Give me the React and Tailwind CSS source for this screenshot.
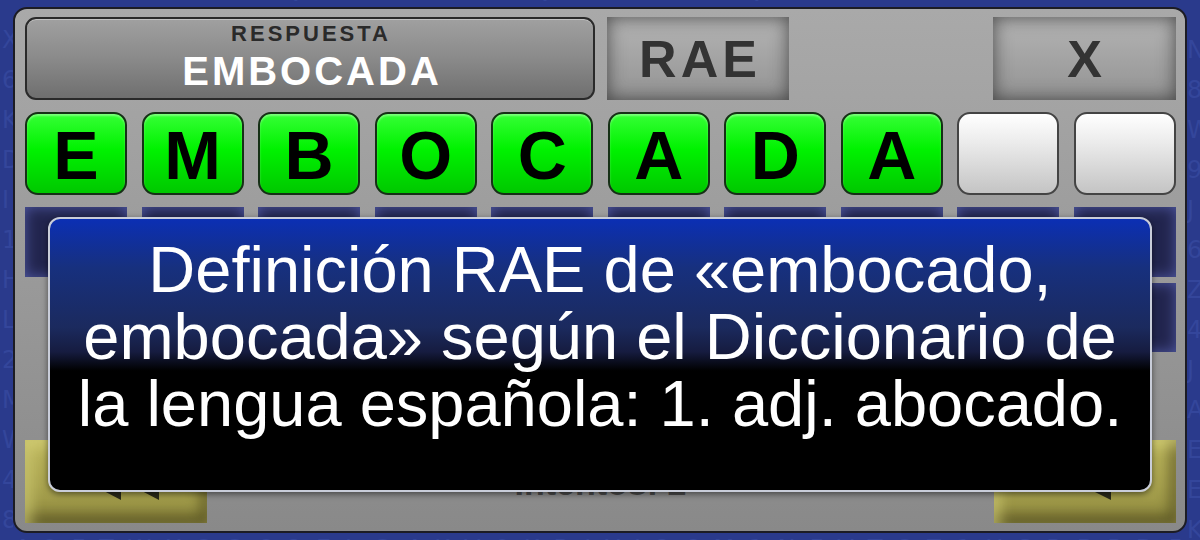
import React from "react";

// letras tenues del fondo (solo se ven en los bordes, alrededor del panel)
function bgText(seed0, n) {
  const chars = "ABCDEFGHIJKLMNOPQRSTUVWXYZ0123456789";
  let seed = seed0;
  let out = "";
  for (let i = 0; i < n; i++) {
    seed = (seed * 9301 + 49297) % 233280;
    out += chars[Math.floor((seed / 233280) * chars.length)];
  }
  return out;
}

const LETTERS = ["E", "M", "B", "O", "C", "A", "D", "A", "", ""];

function GreenTile({ letter }) {
  return (
    <div className="h-[83px] rounded-[13px] border-2 border-[#163016] bg-[linear-gradient(180deg,#35ff35_0%,#00f200_45%,#00c800_100%)] flex items-center justify-center shadow-[inset_0_2px_2px_rgba(255,255,255,0.35)]">
      <span className="text-[68px] font-bold leading-none text-black translate-y-[1px]">{letter}</span>
    </div>
  );
}

function WhiteTile() {
  return (
    <div className="h-[83px] rounded-[13px] border-2 border-[#444] bg-[linear-gradient(180deg,#ffffff_0%,#ececec_35%,#c4c4c4_100%)]" />
  );
}

function BlueKey() {
  return (
    <div className="h-full bg-[#22254e] shadow-[inset_0_0_14px_rgba(95,105,190,0.75)]" />
  );
}

function GrayButton({ children, className }) {
  return (
    <div
      className={`h-[83px] flex items-center justify-center bg-[linear-gradient(180deg,#b4b4b4_0%,#a2a2a2_55%,#939393_100%)] shadow-[inset_0_0_18px_rgba(40,40,40,0.75)] text-[#333] font-bold text-[52px] leading-none tracking-[4px] ${className}`}
    >
      <span className="translate-x-[2px]">{children}</span>
    </div>
  );
}

function YellowButton({ children }) {
  return (
    <div className="relative w-[182px] h-[83px] bg-[linear-gradient(180deg,#bbb55c_0%,#a9a34f_55%,#8f8a3f_100%)] shadow-[inset_6px_6px_14px_rgba(225,220,130,0.6),inset_-6px_-8px_14px_rgba(60,55,20,0.6)] flex items-center justify-center">
      {children}
    </div>
  );
}

const stripText = "text-[24px] leading-[40px] text-[#34469b] select-none font-['DejaVu_Sans',sans-serif]";

export default function App() {
  return (
    <div className="relative w-[1200px] h-[540px] overflow-hidden bg-[#2a3a8c] font-['Liberation_Sans',Arial,sans-serif]">
      {/* bordes con letras */}
      <div className={`absolute left-0 top-0 w-[13px] h-[540px] overflow-hidden pl-[2px] pt-[20px] break-all ${stripText}`}>
        <div className="w-[20px]">{bgText(11, 14)}</div>
      </div>
      <div className={`absolute right-0 top-0 w-[13px] h-[540px] overflow-hidden pt-[30px] break-all ${stripText}`}>
        <div className="w-[20px]">{bgText(29, 14)}</div>
      </div>
      <div className={`absolute left-[13px] top-0 w-[1174px] h-[7px] overflow-hidden whitespace-nowrap tracking-[14px] ${stripText}`}>
        <div className="-translate-y-[30px]">{bgText(5, 40)}</div>
      </div>
      <div className={`absolute left-[13px] bottom-0 w-[1174px] h-[7px] overflow-hidden whitespace-nowrap tracking-[14px] ${stripText}`}>
        <div className="translate-y-[-4px]">{bgText(41, 40)}</div>
      </div>

      <div className="relative ml-[13px] mt-[7px] w-[1174px] h-[526px] rounded-[14px] border-2 border-[#1c1c24] bg-[linear-gradient(180deg,#a9a9a9_0%,#9a9a9a_50%,#898989_100%)] pl-[10px] pr-[9px] pt-[8px] pb-[8px] flex flex-col">
        <div className="flex h-[83px] gap-[12px]">
          <div className="w-[570px] h-[83px] rounded-[11px] border-2 border-[#2a2a2a] bg-[linear-gradient(180deg,#a0a0a0_0%,#8a8a8a_50%,#6f6f6f_100%)] shadow-[inset_0_1px_0_rgba(255,255,255,0.35)] flex flex-col items-center">
            <div className="mt-[4px] text-[22px] font-bold leading-none tracking-[3px] text-[#2a2a2a] translate-x-[1px]">RESPUESTA</div>
            <div className="mt-[6px] text-[40px] font-bold leading-none tracking-[3px] text-white translate-x-[2px]">EMBOCADA</div>
          </div>
          <GrayButton className="w-[182px]">RAE</GrayButton>
          <div className="flex-1" />
          <GrayButton className="w-[183px]">X</GrayButton>
        </div>

        <div className="mt-[12px] grid grid-cols-10 gap-x-[14.5px]">
          {LETTERS.map((l, i) => (l ? <GreenTile key={i} letter={l} /> : <WhiteTile key={i} />))}
        </div>

        <div className="mt-[12px] h-[70px] grid grid-cols-10 gap-x-[14.5px]">
          {Array.from({ length: 10 }).map((_, i) => (
            <BlueKey key={i} />
          ))}
        </div>

        <div className="mt-[6px] h-[69px] grid grid-cols-10 gap-x-[14.5px]">
          <div />
          {Array.from({ length: 9 }).map((_, i) => (
            <BlueKey key={i} />
          ))}
        </div>

        <div className="flex-1" />

        <div className="flex items-center h-[83px]">
          <YellowButton>
            <svg width="90" height="44" viewBox="0 0 90 44" className="translate-y-[-2px]">
              <polygon points="50,2 50,42 12,22" fill="#2a2a1a" />
              <polygon points="88,2 88,42 50,22" fill="#2a2a1a" />
            </svg>
          </YellowButton>
          <div className="flex-1 text-center text-[34px] font-bold leading-none text-[#4a4a4a] translate-y-[1px]">Intentos: 2</div>
          <YellowButton>
            <svg width="60" height="44" viewBox="0 0 60 44" className="translate-x-[8px] translate-y-[-2px]">
              <polygon points="48,2 48,42 8,22" fill="#2a2a1a" />
            </svg>
          </YellowButton>
        </div>
      </div>

      <div className="absolute left-[48px] top-[217px] w-[1104px] h-[275px] z-20 rounded-[12px] border-2 border-[#c9cdd9] bg-[linear-gradient(180deg,#0b2fb4_0%,#17307e_18%,#1b2a5e_40%,#161c40_49%,#000_56%,#000_100%)] shadow-[0_2px_6px_rgba(0,0,0,0.5)]">
        <div className="pt-[17px] text-center text-white text-[65px] leading-[67px] whitespace-nowrap">
          Definición RAE de «embocado,
          <br />
          embocada» según el Diccionario de
          <br />
          la lengua española: 1. adj. abocado.
        </div>
      </div>
    </div>
  );
}
